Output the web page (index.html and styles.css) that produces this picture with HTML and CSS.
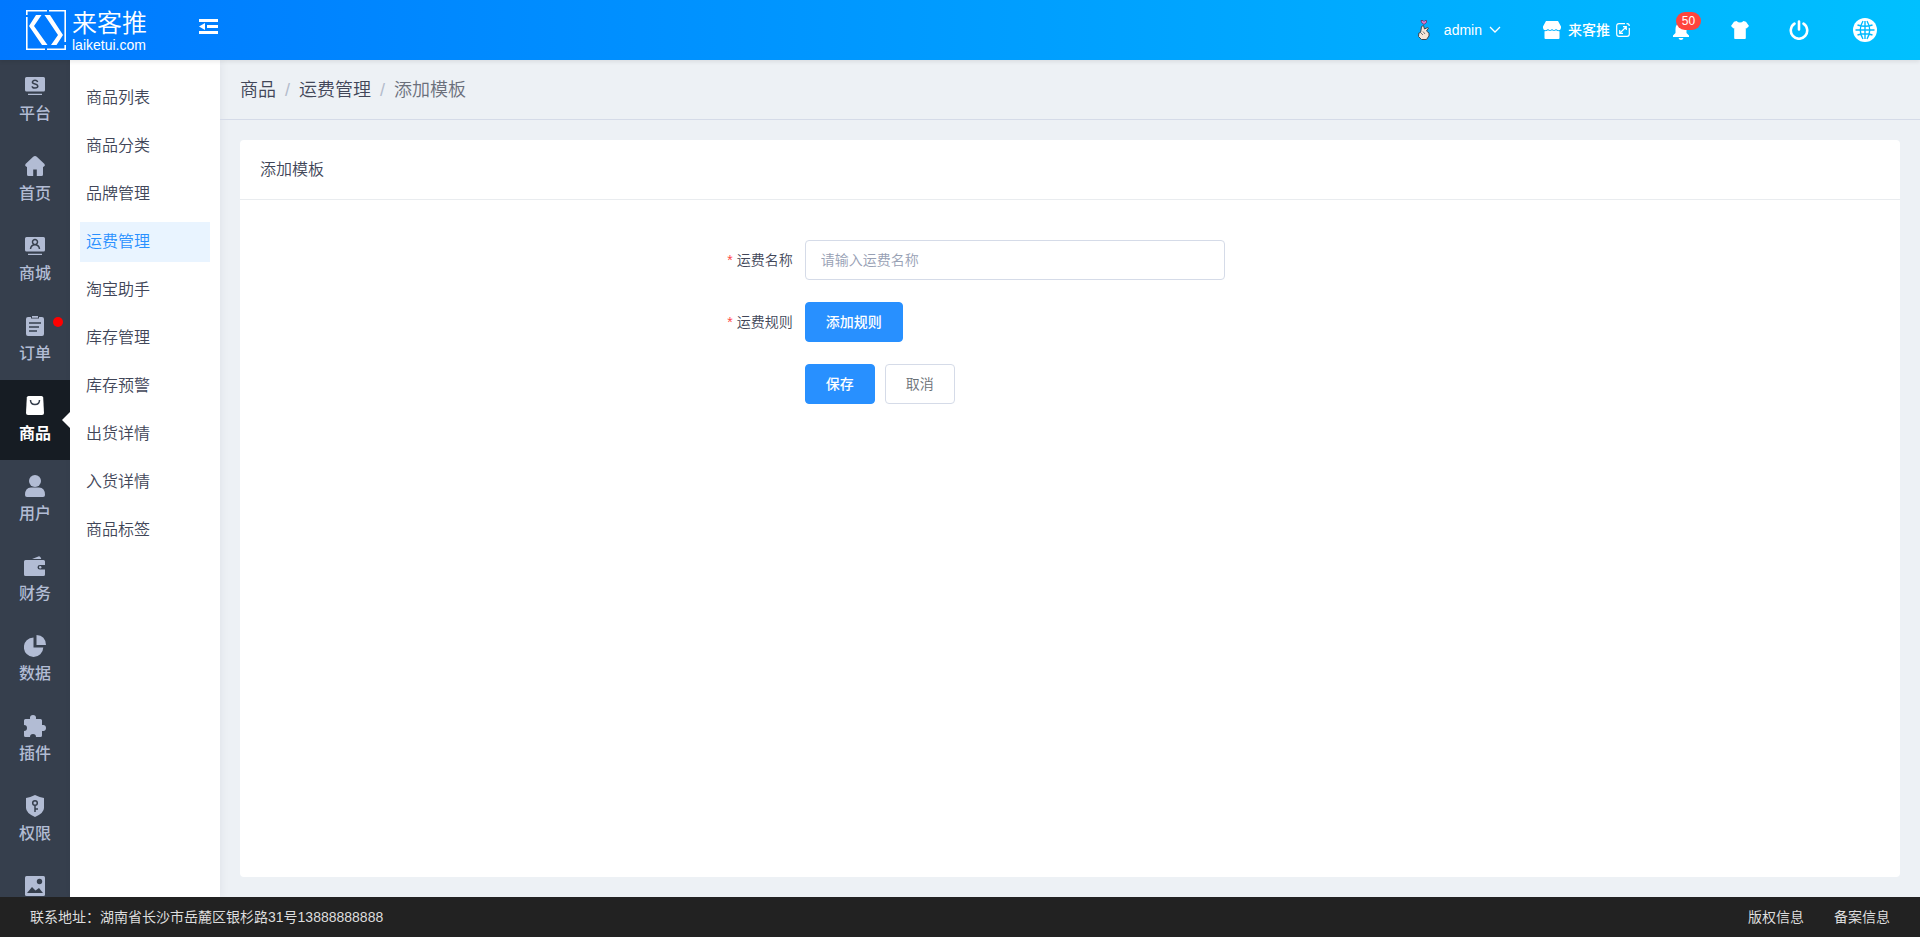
FILE: index.html
```html
<!DOCTYPE html>
<html lang="zh-CN">
<head>
<meta charset="utf-8">
<title>添加模板</title>
<link rel="stylesheet" href="styles.css">
</head>
<body>
<header class="topbar">
  <a class="logo" href="#">
    <svg class="logo-mark" viewBox="0 0 40 40" aria-hidden="true">
      <path d="M21 .8H.8V5M.8 7V39.200H19M23 .8H39.200V32M39.200 35V39.200H21" fill="none" stroke="#fff" stroke-width="1.600"/>
      <path d="M10 5H15.500L8 16L21.500 35H16L3 16ZM18.500 5H24L37 25L30.500 35H25L32 25Z" fill="#fff"/>
    </svg>
    <span class="logo-words"><span class="logo-name">来客推</span><span class="logo-site">laiketui.com</span></span>
  </a>
  <button class="icon-button fold" aria-label="收起菜单">
    <svg width="19" height="16" viewBox="0 0 19 16" fill="#fff"><path d="M0 0H19V3H0ZM8 6H19V9H8ZM0 12H19V15H0ZM0 7.500L6 4V11Z"/></svg>
  </button>
  <nav class="tools">
    <button class="tool user">
      <svg width="14" height="22" viewBox="0 0 14 22"><path d="M4 1.500H6L7 2.500L8 1.500H9.500V3.500L7 5.500L4.500 3.500Z" fill="#e07ad2" stroke="#5c3566" stroke-width=".8"/><path d="M4 11L4.500 7.500L6.500 6.500L7.500 10L10.500 8.500L11.500 9L9.500 12L12 14V17L9.500 20.500H4.500L1.500 17.500L1.800 14L3.500 13.500Z" fill="#f5e6d8" stroke="#3b4654" stroke-width="1"/><path d="M4 14L6 16M6 12.500L8 15" stroke="#3b4654" stroke-width=".7"/></svg>
      <span>admin</span>
      <svg class="chevron" width="12" height="8" viewBox="0 0 12 8" fill="none" stroke="#fff" stroke-width="1.300"><path d="M1 1L6 6L11 1"/></svg>
    </button>
    <button class="tool store">
      <svg width="18" height="18" viewBox="0 0 18 18" fill="#fff"><path d="M3 0H15L18 5.500V7A2.500 2.500 0 0 1 15.500 9.200Q14 9 13 8Q11 10.300 9 8Q7 10.300 5 8Q4 9 2.500 9.200A2.500 2.500 0 0 1 0 7V5.500ZM1.500 10.200Q4 10.200 5 9.300Q7 10.800 9 9.300Q11 10.800 13 9.300Q14 10.200 16.500 10.200V17Q16.500 18 15.500 18H2.500Q1.500 18 1.500 17Z"/></svg>
      <span>来客推</span>
      <svg width="14" height="14" viewBox="0 0 14 14" fill="none" stroke="#fff" stroke-width="1.200"><path d="M9 .7H3Q.7 .7 .7 3V11Q.7 13.300 3 13.300H11Q13.300 13.300 13.300 11V5M10.500 .7H11Q13.300 .7 13.300 3M4 10L10 4M7 3.700H10.300V7M3.700 7V10.300H7"/></svg>
    </button>
    <button class="tool bell" aria-label="消息">
      <svg width="16" height="20" viewBox="0 0 16 20" fill="#fff"><path d="M7 1H9V3Q13.500 4 13.500 9V13L16 15.500V17H0V15.500L2.500 13V9Q2.500 4 7 3ZM5.500 18H10.500Q10 20 8 20T5.500 18Z"/></svg>
      <span class="badge">50</span>
    </button>
    <button class="tool shirt" aria-label="主题">
      <svg width="18" height="18" viewBox="0 0 18 18" fill="#fff"><path d="M5.500 0Q9 3 12.500 0L15 .8L18 5L15.500 7.500L14.800 7V17Q14.800 18 14 18H4Q3.200 18 3.200 17V7L2.500 7.500L0 5L3 .8Z"/></svg>
    </button>
    <button class="tool power" aria-label="退出">
      <svg width="20" height="20" viewBox="0 0 20 20" fill="none" stroke="#fff" stroke-width="2.600" stroke-linecap="round"><path d="M10 1.500V9.500M5.500 3.700A8.200 8.200 0 1 0 14.500 3.700"/></svg>
    </button>
    <button class="tool globe" aria-label="语言">
      <svg width="24" height="24" viewBox="0 0 24 24"><circle cx="12" cy="12" r="12" fill="#fff"/><g fill="none" stroke="#00baff" stroke-width="1.400"><path d="M12 3V21M2.500 12H21.500M4.500 7Q12 9.500 19.500 7M4.500 17Q12 14.500 19.500 17"/><path d="M10 3Q4.500 12 10 21M14 3Q19.500 12 14 21"/></g></svg>
    </button>
  </nav>
</header>

<div class="body">
  <nav class="rail">
    <a href="#"><svg viewBox="0 0 22 22"><path d="M2.500 2H19.500Q21 2 21 3.500V15Q21 16.500 19.500 16.500H2.500Q1 16.500 1 15V3.500Q1 2 2.500 2ZM4 18.700H18V20H4Z"/><path class="line" d="M13.700 7Q13 5.300 11 5.300T8.400 7Q8.400 8.500 11 9T13.800 11.300Q13.800 13 11 13T8.200 11.200"/></svg><span>平台</span></a>
    <a href="#"><svg viewBox="0 0 22 22"><path d="M11 1Q12 1 12.800 1.800L20.500 9Q21.500 10.500 20 11.500L19 12V19.500Q19 21 17.500 21H12.800V14.500H9.200V21H4.500Q3 21 3 19.500V12L2 11.500Q.5 10.500 1.500 9L9.200 1.800Q10 1 11 1Z"/></svg><span>首页</span></a>
    <a href="#"><svg viewBox="0 0 22 22"><path d="M2.500 2H19.500Q21 2 21 3.500V15Q21 16.500 19.500 16.500H2.500Q1 16.500 1 15V3.500Q1 2 2.500 2ZM4 18.700H18V20H4Z"/><path class="line" d="M6.500 14Q7 9.800 11 9.800T15.500 14M11 9.500A2.500 2.500 0 1 1 11 4.500A2.500 2.500 0 1 1 11 9.500"/></svg><span>商城</span></a>
    <a href="#"><svg viewBox="0 0 22 22"><path d="M4 2H7V3.500H15V2H18Q20 2 20 4V19Q20 21 18 21H4Q2 21 2 19V4Q2 2 4 2ZM8 1H14V2.700H8Z"/><path class="line" d="M5 8H17M5 12H15M5 16H13"/></svg><span>订单</span><i class="dot"></i></a>
    <a href="#" class="active" aria-current="page"><svg viewBox="0 0 22 22"><path d="M4.500 1H17.500Q19 1 19.200 2.500L20 18Q20 20 18 20H4Q2 20 2 18L2.800 2.500Q3 1 4.500 1Z"/><path class="line" d="M6.500 5Q6.500 9.500 11 9.500T15.500 5"/></svg><span>商品</span></a>
    <a href="#"><svg viewBox="0 0 22 22"><circle cx="11" cy="6" r="6"/><path d="M1 20Q1 12.500 7 12.500H15Q21 12.500 21 20Q21 22 19 22H3Q1 22 1 20Z"/></svg><span>用户</span></a>
    <a href="#"><svg viewBox="0 0 22 22"><path d="M8 4L15 1.200Q16.500 1 17.300 4ZM1.500 5H19.500Q21 5 21 6.500V10H16Q13.500 10 13.500 12.300T16 14.500H21V19.500Q21 21 19.500 21H1.500Q0 21 0 19.500V6.500Q0 5 1.500 5Z"/><circle cx="16.200" cy="12.300" r="1.200"/></svg><span>财务</span></a>
    <a href="#"><svg viewBox="0 0 22 22"><path d="M9.500 2.500V12.500H19.300A9.700 9.700 0 1 1 9.500 2.500ZM12.500 0Q21.500 .5 22 10H12.500Z"/></svg><span>数据</span></a>
    <a href="#"><svg viewBox="0 0 22 22"><path d="M1.500 4H6A3 3 0 0 1 12 4H16.500Q18 4 18 5.500V10A3 3 0 0 1 18 16V20.500Q18 22 16.500 22H12A3 3 0 0 0 6 22H1.500Q0 22 0 20.500V16A3 3 0 0 0 0 10V5.500Q0 4 1.500 4Z"/><circle cx="19" cy="13" r="3"/><circle cx="9" cy="3" r="3"/></svg><span>插件</span></a>
    <a href="#"><svg viewBox="0 0 22 22"><path d="M11 0Q16 2.500 20 3V13Q20 18 11 22Q2 18 2 13V3Q6 2.500 11 0Z"/><circle class="line" cx="11" cy="8" r="2.300"/><path class="line" d="M11 10.500V17M11 14H14"/></svg><span>权限</span></a>
    <a href="#" aria-label="资源"><svg viewBox="0 0 22 22"><path d="M2.500 1H19.500Q21 1 21 2.500V19.500Q21 21 19.500 21H2.500Q1 21 1 19.500V2.500Q1 1 2.500 1Z"/><path class="hole" d="M3 18L8 12L11.500 15.500L15 13L19 18Z"/><circle class="hole" cx="15.500" cy="6.500" r="2.700"/></svg></a>
  </nav>
  <nav class="submenu">
    <a href="#">商品列表</a>
    <a href="#">商品分类</a>
    <a href="#">品牌管理</a>
    <a href="#" class="current" aria-current="page">运费管理</a>
    <a href="#">淘宝助手</a>
    <a href="#">库存管理</a>
    <a href="#">库存预警</a>
    <a href="#">出货详情</a>
    <a href="#">入货详情</a>
    <a href="#">商品标签</a>
  </nav>
  <main class="main">
    <nav class="crumbs"><a href="#">商品</a><span class="slash">/</span><a href="#">运费管理</a><span class="slash">/</span><span class="here">添加模板</span></nav>
    <section class="card">
      <h1 class="card-title">添加模板</h1>
      <form class="form">
        <label class="label" for="name">运费名称</label>
        <input class="field" id="name" type="text" placeholder="请输入运费名称">
        <label class="label" for="rule">运费规则</label>
        <div class="cell"><button class="btn primary" id="rule" type="button">添加规则</button></div>
        <div class="cell actions"><button class="btn primary" type="button">保存</button><button class="btn" type="button">取消</button></div>
      </form>
    </section>
  </main>
</div>

<footer class="footer">
  <span>联系地址：湖南省长沙市岳麓区银杉路31号13888888888</span>
  <span class="links"><a href="#">版权信息</a><a href="#">备案信息</a></span>
</footer>
</body>
</html>
```

FILE: styles.css
```css
* { box-sizing: border-box; }
body {
  margin: 0;
  height: 100vh;
  display: flex;
  flex-direction: column;
  overflow: hidden;
  font-family: "Liberation Sans", "Noto Sans CJK SC", sans-serif;
  font-size: 14px;
  font-weight: 350;
  color: #414658;
}
a { color: inherit; text-decoration: none; }
button, input { font: inherit; }

.topbar {
  flex: none;
  height: 60px;
  display: flex;
  align-items: center;
  padding: 0 43px 0 26px;
  background: linear-gradient(90deg, #0078ff, #00c0ff);
  color: #fff;
  font-weight: 500;
  position: relative;
  z-index: 2;
  box-shadow: 0 2px 4px rgba(0, 0, 0, .08);
}
.logo { display: flex; gap: 6px; align-items: center; }
.logo-mark { width: 40px; height: 40px; }
.logo-words { display: flex; flex-direction: column; padding-top: 2px; }
.logo-name { font-size: 25px; line-height: 28px; font-weight: 350; }
.logo-site { font-size: 14px; line-height: 16px; }
.icon-button, .tool { border: 0; padding: 0; background: none; color: #fff; display: flex; align-items: center; }
.fold { margin: 0 0 6px 52px; }
.tools { margin-left: auto; display: flex; align-items: center; }
.user span { margin: 0 7px 0 13px; }
.store { margin-left: 42px; gap: 6px; line-height: 18px; }
.store span { margin-left: 1px; }
.bell { margin-left: 43px; position: relative; }
.badge {
  position: absolute;
  left: 3px;
  top: -8px;
  width: 25px;
  height: 18px;
  border-radius: 9px;
  background: #ff453d;
  font-size: 12px;
  line-height: 18px;
  text-align: center;
}
.shirt { margin-left: 42px; }
.power { margin-left: 40px; }
.globe { margin-left: 44px; }

.body { flex: 1; min-height: 0; display: flex; background: #edf1f5; }
.rail { flex: none; width: 70px; overflow: hidden; background: #363f4d; color: #b2bcd4; }
.rail a {
  height: 80px;
  padding-top: 15px;
  display: flex;
  flex-direction: column;
  align-items: center;
  gap: 5px;
  font-size: 16px;
  line-height: 24px;
  font-weight: 500;
  position: relative;
}
.rail svg { width: 22px; height: 22px; fill: #b2bcd4; }
.rail .line { fill: none; stroke: #363f4d; stroke-width: 1.5px; }
.rail .hole { fill: #363f4d; }
.rail .active { background: #161c23; color: #fff; font-weight: 700; }
.rail .active svg { fill: #fff; }
.rail .active::after {
  content: "";
  position: absolute;
  right: 0;
  top: 32px;
  border: 8px solid transparent;
  border-left: 0;
  border-right-color: #fff;
}
.dot { position: absolute; left: 53px; top: 17px; width: 10px; height: 10px; border-radius: 50%; background: #f00; }

.submenu {
  flex: none;
  width: 150px;
  padding: 18px 10px;
  display: flex;
  flex-direction: column;
  gap: 8px;
  background: #fff;
  box-shadow: 2px 0 8px rgba(0, 0, 60, .05);
}
.submenu a { height: 40px; padding: 0 6px; font-size: 16px; line-height: 40px; }
.submenu .current { background: #e9f4ff; color: #2890ff; }

.main { flex: 1; min-width: 0; display: flex; flex-direction: column; }
.crumbs {
  height: 60px;
  padding: 0 20px;
  display: flex;
  gap: 9px;
  border-bottom: 1px solid #d5dbe8;
  font-size: 18px;
  line-height: 61px;
}
.slash { color: #b4bccc; }
.here { color: #6a6f7b; }
.card { flex: 1; margin: 20px; border-radius: 4px; background: #fff; }
.card-title {
  height: 60px;
  margin: 0;
  padding: 0 20px;
  border-bottom: 1px solid #e9ecef;
  font-size: 16px;
  line-height: 59px;
  font-weight: 350;
}
.form { display: grid; grid-template-columns: 5fr 420px 6fr; gap: 22px 12px; padding: 40px 0; }
.label { grid-column: 1; text-align: right; line-height: 40px; }
.label::before { content: "*"; margin-right: 4px; color: #ff4949; }
.field, .cell { grid-column: 2; }
.field { height: 40px; padding: 0 15px; border: 1px solid #d5dbe8; border-radius: 4px; color: #414658; background: #fff; }
.field::placeholder { color: #97a0b4; }
.actions { display: flex; gap: 10px; }
.btn { height: 40px; padding: 0 20px 2px; border: 1px solid #d5dbe8; border-radius: 4px; background: #fff; color: #6a7076; }
.primary { border-color: #2890ff; background: #2890ff; color: #fff; font-weight: 500; }

.footer {
  flex: none;
  height: 40px;
  padding: 0 30px 2px;
  display: flex;
  justify-content: space-between;
  align-items: center;
  background: #222;
  color: #ddd;
  font-weight: 400;
}
.links { display: flex; gap: 30px; }
```
